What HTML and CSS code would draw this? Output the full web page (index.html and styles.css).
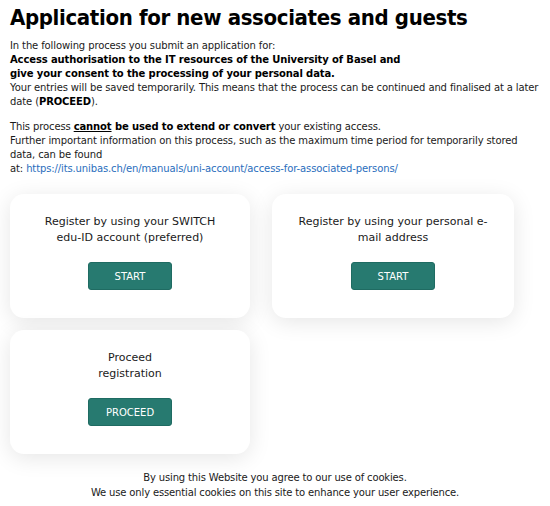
FILE: index.html
```html
<!DOCTYPE html>
<html lang="en">
<head>
<meta charset="utf-8">
<title>Application for new associates and guests</title>
<link rel="stylesheet" href="styles.css">
</head>
<body>
<main class="page">
  <h1 class="title">Application for new associates and guests</h1>
  <p class="intro">
    In the following process you submit an application for:<br>
    <strong>Access authorisation to the IT resources of the University of Basel and<br>give your consent to the processing of your personal data.</strong><br>
    Your entries will be saved temporarily. This means that the process can be continued and finalised at a later date (<strong>PROCEED</strong>).
  </p>
  <p class="intro">
    This process <strong><u>cannot</u> be used to extend or convert</strong> your existing access.<br>
    Further important information on this process, such as the maximum time period for temporarily stored data, can be found<br>
    at: <a class="link" href="#">https://its.unibas.ch/en/manuals/uni-account/access-for-associated-persons/</a>
  </p>
  <section class="cards">
    <div class="card">
      <p class="card-text">Register by using your SWITCH edu-ID account (preferred)</p>
      <button class="btn">START</button>
    </div>
    <div class="card">
      <p class="card-text">Register by using your personal e-mail address</p>
      <button class="btn">START</button>
    </div>
    <div class="card">
      <p class="card-text">Proceed<br>registration</p>
      <button class="btn">PROCEED</button>
    </div>
  </section>
  <footer class="cookies">
    By using this Website you agree to our use of cookies.<br>
    We use only essential cookies on this site to enhance your user experience.
  </footer>
</main>
</body>
</html>
```
FILE: styles.css
```css
html, body {
  margin: 0;
  padding: 0;
  background: #ffffff;
}
body {
  font-family: "DejaVu Sans", Verdana, sans-serif;
  color: #1a1a1a;
}
.page {
  padding: 0 10px;
}
.title {
  margin: 0;
  padding-top: 3px;
  font-family: "DejaVu Sans Condensed", "DejaVu Sans", Verdana, sans-serif;
  font-weight: bold;
  font-size: 22px;
  line-height: 30px;
  color: #000;
  letter-spacing: -0.35px;
}
.intro {
  margin: 6px 0 11px;
  font-size: 10px;
  line-height: 14px;
  letter-spacing: -0.12px;
}
.intro strong {
  color: #000;
}
.link {
  color: #2a6ebd;
  text-decoration: none;
}
.cards {
  display: grid;
  grid-template-columns: 240px 242px;
  column-gap: 22px;
  row-gap: 12px;
  margin-top: 18px;
}
.card {
  background: #fff;
  border-radius: 14px;
  box-shadow: 0 4px 22px rgba(0, 0, 0, 0.1);
  height: 124px;
  box-sizing: border-box;
  padding: 20px 22px 0;
  display: flex;
  flex-direction: column;
  align-items: center;
}
.card-text {
  margin: 0;
  font-size: 11px;
  line-height: 16px;
  text-align: center;
  color: #1a1a1a;
}
.btn {
  margin-top: 16px;
  width: 84px;
  height: 28px;
  border: 1px solid #1f6b62;
  border-radius: 3px;
  background: #277a70;
  color: #fff;
  font-family: "DejaVu Sans", Verdana, sans-serif;
  font-size: 10px;
  font-weight: 500;
  padding: 0;
}
.cookies {
  margin-top: 16px;
  text-align: center;
  font-size: 10px;
  line-height: 15px;
  letter-spacing: -0.15px;
  color: #1a1a1a;
}
```
